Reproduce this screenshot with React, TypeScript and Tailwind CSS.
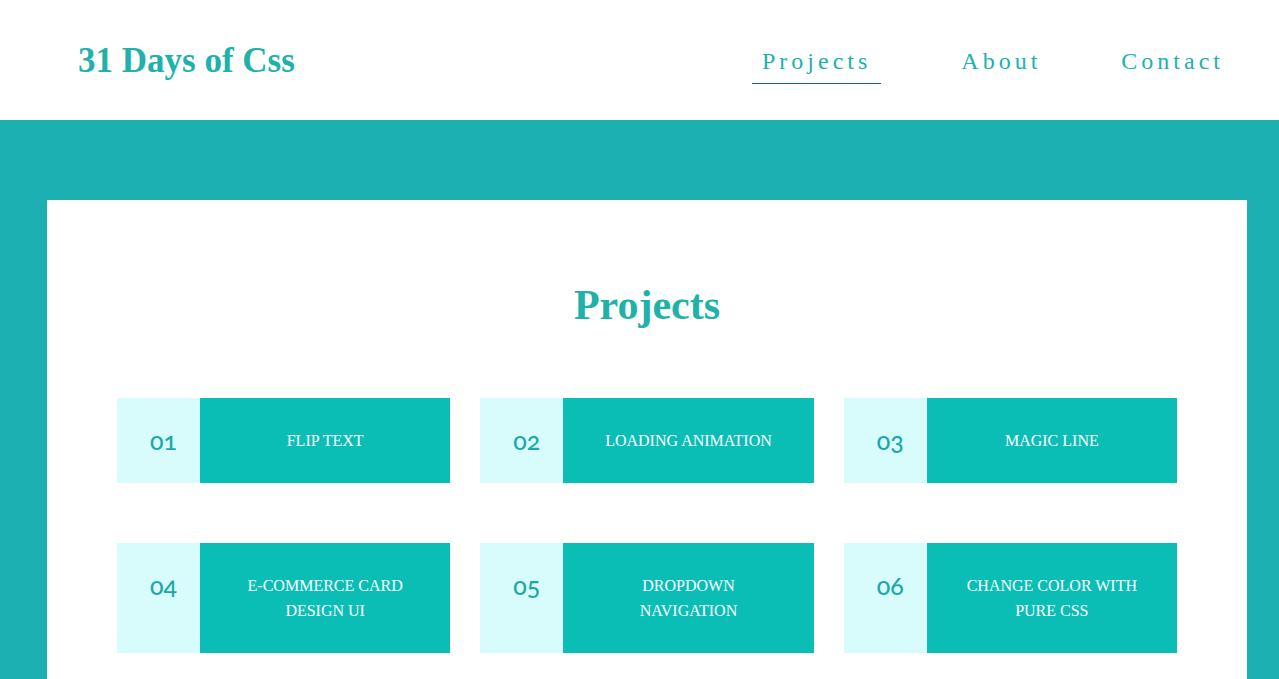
const projects = [
  { num: "01", title: "Flip Text" },
  { num: "02", title: "Loading Animation" },
  { num: "03", title: "Magic Line" },
  { num: "04", title: "E-Commerce Card Design UI" },
  { num: "05", title: "Dropdown Navigation" },
  { num: "06", title: "Change Color with Pure Css" },
];

const links = ["Projects", "About", "Contact"];

export default function App() {
  return (
    <div className="min-h-screen bg-white font-['Liberation_Serif','Times_New_Roman',serif]">
      {/* HEADER */}
      <header className="h-[120px] flex items-center justify-between pl-[78px] pr-[45px]">
        <h1 className="text-[35px] font-bold text-[#20b2aa] leading-none">31 Days of Css</h1>
        <nav className="flex items-center mt-[6px]">
          {links.map((l, i) => (
            <a
              key={l}
              href="#"
              className={
                "px-[10px] pt-[4px] pb-[8px] text-[24px] tracking-[4px] leading-[28px] text-[#20b2aa] border-b " +
                (i === 0 ? "border-[#0f6e6e] mr-[70px]" : "border-transparent") +
                (i === 1 ? " mr-[60px]" : "")
              }
            >
              {l}
            </a>
          ))}
        </nav>
      </header>

      {/* CONTENT */}
      <section className="bg-[#1cb0b2] pt-[80px] pl-[47px] pb-[80px]">
        <div className="w-[1200px] bg-white px-[70px] pt-[84px] pb-[60px]">
          <h2 className="text-center text-[42px] font-bold text-[#20b2aa] leading-none">Projects</h2>

          <div className="mt-[72px] grid grid-cols-3 gap-x-[30px] gap-y-[60px]">
            {projects.map((p) => (
              <div key={p.num} className="flex">
                <div className="w-[83px] shrink-0 bg-[#d8fcfc] pt-[30px] pl-[33px] text-left text-[25px] leading-[25px] text-[#1ca8a8] font-['Lato',sans-serif] font-medium oldstyle-nums">
                  {p.num}
                </div>
                <div className="flex-1 bg-[#0abeb6] flex items-center justify-center text-center px-[40px] py-[30px] text-[16px] leading-[25px] uppercase text-white">
                  {p.title}
                </div>
              </div>
            ))}
          </div>
        </div>
      </section>
    </div>
  );
}
